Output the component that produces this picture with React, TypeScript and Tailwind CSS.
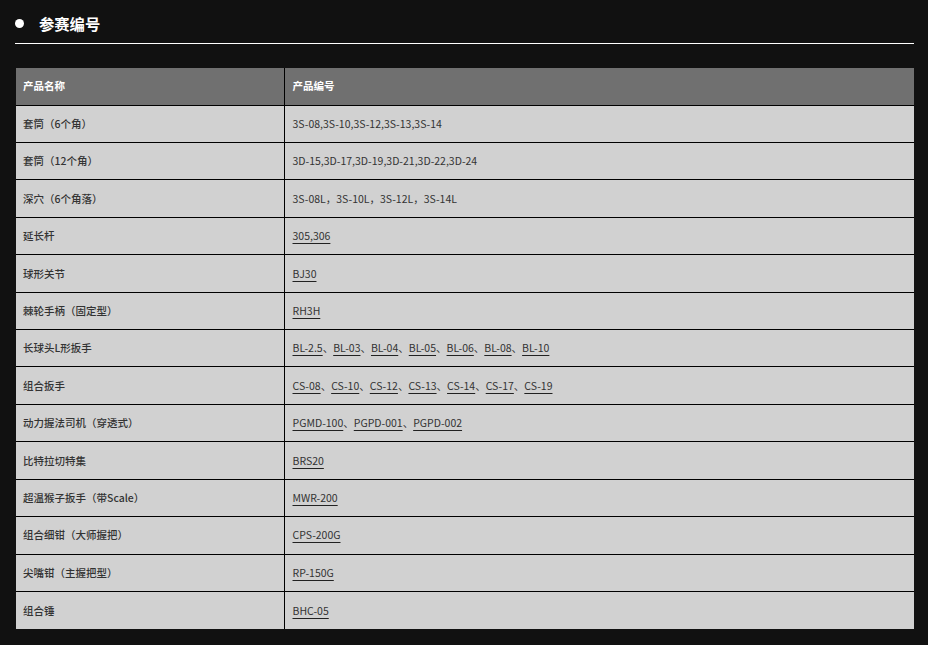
import React from "react";

type Row = { name: string; codes: string[]; link: boolean };

const rows: Row[] = [
  { name: "套筒（6个角）", codes: ["3S-08,3S-10,3S-12,3S-13,3S-14"], link: false },
  { name: "套筒（12个角）", codes: ["3D-15,3D-17,3D-19,3D-21,3D-22,3D-24"], link: false },
  { name: "深穴（6个角落）", codes: ["3S-08L，3S-10L，3S-12L，3S-14L"], link: false },
  { name: "延长杆", codes: ["305,306"], link: true },
  { name: "球形关节", codes: ["BJ30"], link: true },
  { name: "棘轮手柄（固定型）", codes: ["RH3H"], link: true },
  { name: "长球头L形扳手", codes: ["BL-2.5", "BL-03", "BL-04", "BL-05", "BL-06", "BL-08", "BL-10"], link: true },
  { name: "组合扳手", codes: ["CS-08", "CS-10", "CS-12", "CS-13", "CS-14", "CS-17", "CS-19"], link: true },
  { name: "动力握法司机（穿透式）", codes: ["PGMD-100", "PGPD-001", "PGPD-002"], link: true },
  { name: "比特拉切特集", codes: ["BRS20"], link: true },
  { name: "超温猴子扳手（带Scale）", codes: ["MWR-200"], link: true },
  { name: "组合细钳（大师握把）", codes: ["CPS-200G"], link: true },
  { name: "尖嘴钳（主握把型）", codes: ["RP-150G"], link: true },
  { name: "组合锤", codes: ["BHC-05"], link: true },
];

export default function App() {
  return (
    <div
      className="min-h-[645px] w-full bg-[#111111] pb-4"
      style={{ fontFamily: '"Noto Sans CJK SC", "Noto Sans", sans-serif' }}
    >
      <div className="px-[15px] pt-[10px]">
        <div className="flex h-[27px] items-center">
          <span className="h-[9px] w-[9px] rounded-full bg-white" />
          <span className="ml-[15px] text-[15.3px] font-bold leading-none text-white">参赛编号</span>
        </div>
        <div className="mt-[6px] h-px w-[899px] bg-white" />
      </div>
      <div className="pl-[16px] pt-[24px]">
        <table className="w-[898px] border-collapse text-[10.5px]">
          <thead>
            <tr className="h-[37px] bg-[#707070]">
              <th className="w-[268px] border-r border-black pl-[7px] text-left font-bold text-white">产品名称</th>
              <th className="pl-[8px] text-left font-bold text-white">产品编号</th>
            </tr>
          </thead>
          <tbody>
            {rows.map((r, i) => (
              <tr key={i} className="h-[37.43px] border-t border-black bg-[#d1d1d1] text-[#333333]">
                <td className="border-r border-black pl-[7px] font-medium">{r.name}</td>
                <td className="pl-[8px]">
                  {r.link
                    ? r.codes.map((c, j) => (
                        <React.Fragment key={j}>
                          {j > 0 && <span>、</span>}
                          <span className="underline decoration-[#222] decoration-1 underline-offset-[3px]">{c}</span>
                        </React.Fragment>
                      ))
                    : r.codes[0]}
                </td>
              </tr>
            ))}
          </tbody>
        </table>
      </div>
    </div>
  );
}
